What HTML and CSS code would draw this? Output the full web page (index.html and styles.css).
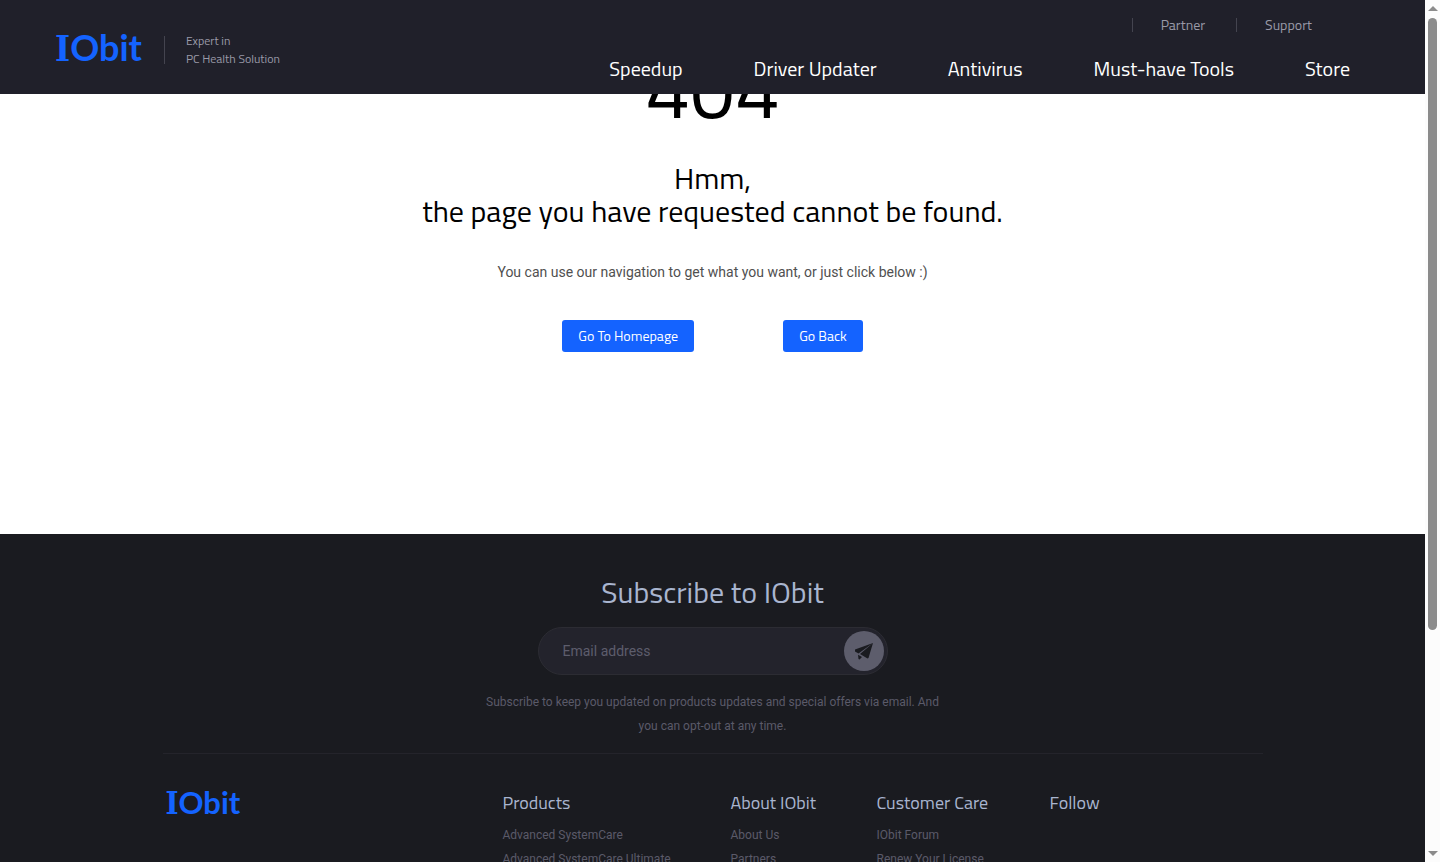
FILE: index.html
```
<!DOCTYPE html>
<html lang="en">
<head>
    <meta charset="UTF-8">
    <meta name="viewport" content="width=device-width, initial-scale=1.0">
    <title>404 - IObit</title>
    <link rel="stylesheet" href="styles.css">
</head>
<body>
    <div class="page">
        <!-- Header -->
        <header class="header">
            <div class="brand">
                <a href="#" class="logo"><span class="logo-i">I</span>Obit</a>
                <p class="slogan">Expert in<br>PC Health Solution</p>
            </div>
            <div class="menus">
                <ul class="top-menu">
                    <li><a href="#">Partner</a></li>
                    <li><a href="#">Support</a></li>
                </ul>
                <nav>
                    <ul class="main-menu">
                        <li><a href="#">Speedup</a></li>
                        <li><a href="#">Driver Updater</a></li>
                        <li><a href="#">Antivirus</a></li>
                        <li><a href="#">Must-have Tools</a></li>
                        <li><a href="#">Store</a></li>
                    </ul>
                </nav>
            </div>
        </header>

        <!-- 404 message -->
        <main class="error">
            <h1>404</h1>
            <h2>Hmm,<br>the page you have requested cannot be found.</h2>
            <p>You can use our navigation to get what you want, or just click below :)</p>
            <div class="error-buttons">
                <button type="button" class="btn">Go To Homepage</button>
                <button type="button" class="btn">Go Back</button>
            </div>
        </main>

        <!-- Footer -->
        <footer class="footer">
            <div class="container">
                <form class="subscribe">
                    <h3><label for="email">Subscribe to IObit</label></h3>
                    <div class="subscribe-box">
                        <input type="email" id="email" name="email" placeholder="Email address">
                        <button type="button" aria-label="Subscribe">
                            <svg width="20" height="18" viewBox="0 0 20 18">
                                <path d="M19 1 L1 7.500 L1 9.500 L4.500 11.500 Z M19 1 L6 12 L13.500 16.500 L14.500 16 Z M4 12.800 L8 15 L5.500 17.500 L4.500 17 Z" fill="#1a1b20"/>
                            </svg>
                        </button>
                    </div>
                    <p>Subscribe to keep you updated on products updates and special offers via email. And you can opt-out at any time.</p>
                </form>

                <div class="footer-links">
                    <a href="#" class="logo logo-small"><span class="logo-i">I</span>Obit</a>
                    <div>
                        <h4>Products</h4>
                        <ul>
                            <li><a href="#">Advanced SystemCare</a></li>
                            <li><a href="#">Advanced SystemCare Ultimate</a></li>
                        </ul>
                    </div>
                    <div>
                        <h4>About IObit</h4>
                        <ul>
                            <li><a href="#">About Us</a></li>
                            <li><a href="#">Partners</a></li>
                        </ul>
                    </div>
                    <div>
                        <h4>Customer Care</h4>
                        <ul>
                            <li><a href="#">IObit Forum</a></li>
                            <li><a href="#">Renew Your License</a></li>
                        </ul>
                    </div>
                    <div>
                        <h4>Follow</h4>
                    </div>
                </div>
            </div>
        </footer>
    </div>

    <!-- Scroll bar -->
    <div class="scrollbar">
        <span class="arrow-up"></span>
        <span class="thumb"></span>
        <span class="arrow-down"></span>
    </div>
</body>
</html>
```
FILE: styles.css
```
* {
    box-sizing: border-box;
}

body {
    display: flex;
    height: 100vh;
    margin: 0;
    overflow: hidden;
    font-family: "Roboto", Arial, sans-serif;
    font-size: 14px;
    background-color: #fff;
}

h1, h2, h3, h4, p, ul {
    margin: 0;
    padding: 0;
    font-weight: 400;
}

ul {
    list-style: none;
}

a {
    color: inherit;
    text-decoration: none;
}

.page {
    position: relative;
    flex: 1;
    overflow: hidden;
}

/* header, stays over the scrolled page */
.header {
    position: absolute;
    z-index: 2;
    top: 0;
    left: 0;
    right: 0;
    display: flex;
    justify-content: space-between;
    height: 94px;
    padding: 0 75px 0 55px;
    background-color: #20202a;
    font-family: "Titillium Web", "Roboto", sans-serif;
}

.brand {
    display: flex;
    align-items: center;
    gap: 22px;
}

.logo {
    color: #1463ff;
    font-family: "Lato", sans-serif;
    font-size: 36px;
    font-weight: 700;
    line-height: 40px;
}

.logo-i {
    font-family: "DejaVu Serif Condensed", "DejaVu Serif", serif;
}

.logo-small {
    font-size: 31px;
    line-height: 26px;
}

.slogan {
    position: relative;
    padding: 5px 0 0 22px;
    color: #9a9aa8;
    font-size: 12px;
    line-height: 18px;
}

.slogan::before {
    content: "";
    position: absolute;
    top: 9px;
    left: 0;
    height: 28px;
    border-left: 1px solid #44444f;
}

.menus {
    display: flex;
    flex-direction: column;
    padding-top: 18px;
}

.top-menu {
    display: flex;
    justify-content: flex-end;
    gap: 31px;
    padding-right: 38px;
    color: #9a9aa8;
    font-size: 14px;
    line-height: 14px;
}

.top-menu li {
    padding-left: 28px;
    border-left: 1px solid #44444f;
}

.main-menu {
    display: flex;
    justify-content: flex-end;
    gap: 71px;
    padding-top: 22px;
    color: #fff;
    font-size: 20px;
    line-height: 30px;
}

/* 404 */
.error {
    min-height: 534px;
    padding-top: 35px;
    text-align: center;
}

.error h1 {
    margin-bottom: 21px;
    font-family: "Titillium Web", "Roboto", sans-serif;
    font-size: 80px;
    line-height: 106px;
    color: #000;
}

.error h2 {
    font-family: "Titillium Web", "Roboto", sans-serif;
    font-size: 30px;
    line-height: 33px;
    color: #000;
}

.error p {
    padding: 32px 0;
    color: #505050;
    line-height: 24px;
}

.error-buttons {
    display: flex;
    justify-content: center;
    gap: 89px;
    padding-top: 4px;
}

.btn {
    height: 32px;
    padding: 0 16px 2px;
    border: none;
    border-radius: 3px;
    background-color: #1463ff;
    color: #fff;
    font-family: "Titillium Web", "Roboto", sans-serif;
    font-size: 14px;
    cursor: pointer;
}

/* footer */
.footer {
    min-height: 600px;
    padding-top: 39px;
    background-color: #1a1b20;
    color: #5a5a69;
    font-size: 12px;
    line-height: 24px;
}

.container {
    max-width: 1100px;
    margin: 0 auto;
}

.subscribe {
    padding-bottom: 15px;
    border-bottom: 1px solid #24242b;
    text-align: center;
}

.subscribe h3 {
    color: #a9b5cf;
    font-family: "Titillium Web", "Roboto", sans-serif;
    font-size: 30px;
    line-height: 38px;
}

.subscribe-box {
    display: flex;
    align-items: center;
    width: 350px;
    height: 48px;
    margin: 16px auto 15px;
    padding: 0 3px 0 24px;
    border: 1px solid #2c2c33;
    border-radius: 24px;
    background-color: #23232c;
}

.subscribe-box input {
    flex: 1;
    min-width: 0;
    padding: 0;
    border: none;
    outline: none;
    background: none;
    color: #a9b5cf;
    font-family: "Roboto", Arial, sans-serif;
    font-size: 14px;
}

.subscribe-box input::placeholder {
    color: #5d5d6c;
}

.subscribe-box button {
    display: flex;
    align-items: center;
    justify-content: center;
    width: 40px;
    height: 40px;
    padding: 0;
    border: none;
    border-radius: 50%;
    background-color: #5d5d6c;
    cursor: pointer;
}

.subscribe p {
    max-width: 460px;
    margin: 0 auto;
}

.footer-links {
    display: grid;
    grid-template-columns: 337px 228px 146px 173px 1fr;
    align-items: start;
    padding: 35px 0 0 3px;
}

.footer-links h4 {
    padding-bottom: 6px;
    color: #a9b5cf;
    font-family: "Titillium Web", "Roboto", sans-serif;
    font-size: 18px;
    line-height: 28px;
}

/* scroll bar */
.scrollbar {
    display: flex;
    flex-direction: column;
    align-items: center;
    width: 15px;
    padding: 6px 0;
    background-color: #fcfcfc;
}

.scrollbar .thumb {
    width: 9px;
    height: 71vh;
    margin-top: 7px;
    border-radius: 5px;
    background-color: #8b8b8b;
}

.arrow-up, .arrow-down {
    border: 5px solid transparent;
    border-top-width: 0;
    border-bottom: 5px solid #8b8b8b;
}

.arrow-down {
    margin-top: auto;
    border-top: 5px solid #8b8b8b;
    border-bottom-width: 0;
}
```
